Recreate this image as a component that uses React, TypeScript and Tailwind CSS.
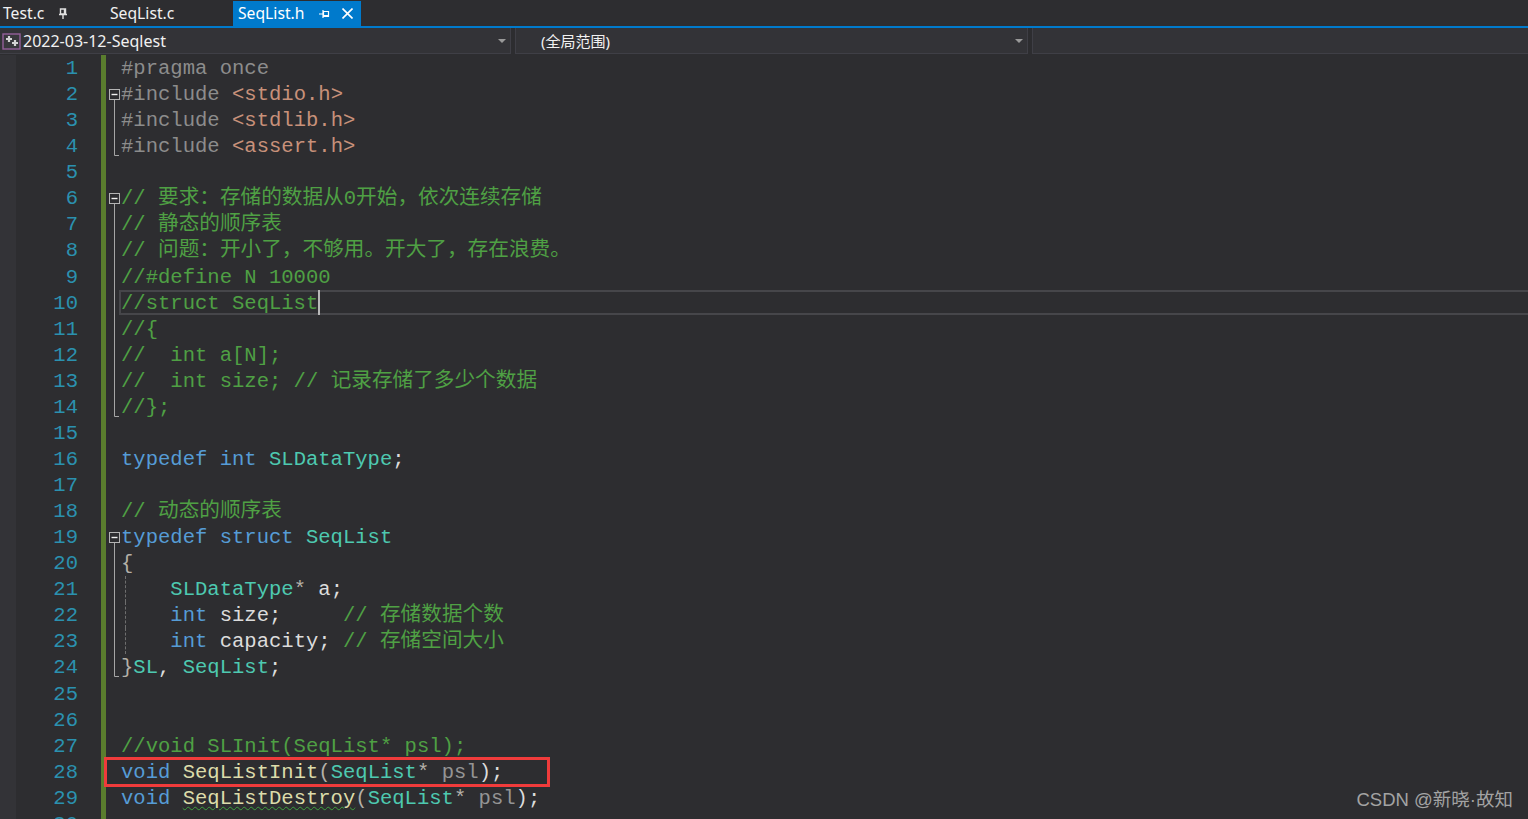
const KW = "text-[#569cd6]";
const TY = "text-[#4ec9b0]";
const CM = "text-[#4fa044]";
const PP = "text-[#8c8c8c]";
const ST = "text-[#c8917a]";
const ID = "text-[#dcdcdc]";
const BR = "text-[#b4b0a8]";
const FN = "text-[#dcdcaa]";
const PA = "text-[#949494]";

type Token = [string, string];
type Fold = "none" | "open" | "line" | "end";

type Line = {
  fold: Fold;
  tokens: Token[];
  guide?: boolean;
  current?: boolean;
  marked?: boolean;
};

const lines: Line[] = [
  { fold: "none", tokens: [["#pragma once", PP]] },
  { fold: "open", tokens: [["#include ", PP], ["<stdio.h>", ST]] },
  { fold: "line", tokens: [["#include ", PP], ["<stdlib.h>", ST]] },
  { fold: "end", tokens: [["#include ", PP], ["<assert.h>", ST]] },
  { fold: "none", tokens: [] },
  { fold: "open", tokens: [["// 要求：存储的数据从0开始，依次连续存储", CM]] },
  { fold: "line", tokens: [["// 静态的顺序表", CM]] },
  { fold: "line", tokens: [["// 问题：开小了，不够用。开大了，存在浪费。", CM]] },
  { fold: "line", tokens: [["//#define N 10000", CM]] },
  { fold: "line", tokens: [["//struct SeqList", CM]], current: true },
  { fold: "line", tokens: [["//{", CM]] },
  { fold: "line", tokens: [["//  int a[N];", CM]] },
  { fold: "line", tokens: [["//  int size; // 记录存储了多少个数据", CM]] },
  { fold: "end", tokens: [["//};", CM]] },
  { fold: "none", tokens: [] },
  {
    fold: "none",
    tokens: [["typedef int ", KW], ["SLDataType", TY], [";", ID]],
  },
  { fold: "none", tokens: [] },
  { fold: "none", tokens: [["// 动态的顺序表", CM]] },
  { fold: "open", tokens: [["typedef struct ", KW], ["SeqList", TY]] },
  { fold: "line", tokens: [["{", BR]] },
  {
    fold: "line",
    guide: true,
    tokens: [["    ", ID], ["SLDataType", TY], ["* ", BR], ["a;", ID]],
  },
  {
    fold: "line",
    guide: true,
    tokens: [["    ", ID], ["int", KW], [" size;     ", ID], ["// 存储数据个数", CM]],
  },
  {
    fold: "line",
    guide: true,
    tokens: [["    ", ID], ["int", KW], [" capacity; ", ID], ["// 存储空间大小", CM]],
  },
  { fold: "end", tokens: [["}", BR], ["SL", TY], [", ", ID], ["SeqList", TY], [";", ID]] },
  { fold: "none", tokens: [] },
  { fold: "none", tokens: [] },
  { fold: "none", tokens: [["//void SLInit(SeqList* psl);", CM]] },
  {
    fold: "none",
    marked: true,
    tokens: [
      ["void ", KW],
      ["SeqListInit", FN],
      ["(", BR],
      ["SeqList", TY],
      ["* ", BR],
      ["psl", PA],
      [");", ID],
    ],
  },
  {
    fold: "none",
    tokens: [
      ["void ", KW],
      ["SeqListDestroy", "text-[#dcdcaa] underline decoration-wavy decoration-[#3fa03f] decoration-1 underline-offset-2"],
      ["(", BR],
      ["SeqList", TY],
      ["* ", BR],
      ["psl", PA],
      [");", ID],
    ],
  },
  { fold: "none", tokens: [] },
];

function PinVertical() {
  return (
    <svg width="10" height="12" viewBox="0 0 10 12" className="text-[#e0e0e0]">
      <path d="M2.500 1h5v5h-5z M1 6.500h8 M5 7v4 M6.500 1v5" fill="none" stroke="currentColor" strokeWidth="1.4" />
    </svg>
  );
}

function PinHorizontal() {
  return (
    <svg width="12" height="10" viewBox="0 0 12 10" className="text-white">
      <path d="M5.500 2.500h5v5h-5z M5 1v8 M1 5h4 M5.500 6.500h5" fill="none" stroke="currentColor" strokeWidth="1.2" />
    </svg>
  );
}

function CloseIcon() {
  return (
    <svg width="11" height="11" viewBox="0 0 11 11" className="text-white">
      <path d="M.5.500l10 10M10.500.500l-10 10" fill="none" stroke="currentColor" strokeWidth="1.6" />
    </svg>
  );
}

function Tabs() {
  return (
    <div className="flex h-[26px] items-end text-[15.7px] text-[#f1f1f1]">
      <div className="flex h-[25px] w-[110px] items-center pl-[3px]">
        <span>Test.c</span>
        <span className="ml-[14px] flex">
          <PinVertical />
        </span>
      </div>
      <div className="flex h-[25px] w-[123px] items-center">SeqList.c</div>
      <div className="flex h-[25px] w-[128px] items-center bg-[#007acc] pl-[5px] text-white">
        <span>SeqList.h</span>
        <span className="ml-[14px] flex">
          <PinHorizontal />
        </span>
        <span className="ml-[12px] flex">
          <CloseIcon />
        </span>
      </div>
    </div>
  );
}

function Arrow() {
  return (
    <svg width="8" height="4" viewBox="0 0 8 4" className="text-[#999999]">
      <path d="M0 0h8L4 4z" fill="currentColor" />
    </svg>
  );
}

function ProjectIcon() {
  return (
    <svg width="19" height="17" viewBox="0 0 19 17">
      <rect x="1" y="1" width="17" height="15" fill="#38383c" stroke="#94609a" strokeWidth="1.400" />
      <path d="M7 3v6M4 6h6M13 7v6M10 10h6" stroke="#d4d4d4" strokeWidth="2.200" fill="none" />
    </svg>
  );
}

function NavBar() {
  return (
    <div className="box-content flex h-[26px] gap-[4px] border-t-2 border-[#007acc] text-[16px] text-[#f1f1f1]">
      <div className="flex h-[26px] w-[511px] items-center border-b border-r border-[#3f3f46] bg-[#333337] pl-[2px] pr-[4px] pt-[1px]">
        <ProjectIcon />
        <span className="ml-[2px]">2022-03-12-Seqlest</span>
        <span className="ml-auto flex">
          <Arrow />
        </span>
      </div>
      <div className="flex h-[26px] w-[513px] items-center border border-t-0 border-[#3f3f46] bg-[#333337] pl-[25px] pr-[4px] pt-[1px]">
        <span className="text-[15px]">(全局范围)</span>
        <span className="ml-auto flex">
          <Arrow />
        </span>
      </div>
      <div className="h-[26px] flex-1 border-b border-l border-[#3f3f46] bg-[#333337]" />
    </div>
  );
}

function FoldMark({ fold }: { fold: Fold }) {
  if (fold === "none") return null;
  return (
    <svg width="15" height="27" viewBox="0 0 15 27" className="block">
      {fold === "open" && (
        <>
          <path d="M8.500 17v10" stroke="#a5a5a5" fill="none" />
          <rect x="3.500" y="8.500" width="10" height="10" fill="#2d2d30" stroke="#b4b4b4" />
          <path d="M5.500 13.500h6" stroke="#f0f0f0" strokeWidth="1.400" fill="none" />
        </>
      )}
      {fold === "line" && <path d="M8.500 0v27" stroke="#a5a5a5" fill="none" />}
      {fold === "end" && <path d="M8.500 0v22.500h4.500" stroke="#a5a5a5" fill="none" />}
    </svg>
  );
}

// CJK runs sit a touch wider than the mono text around them
function TokenText({ token }: { token: Token }) {
  const parts = token[0].split(/([\u3000-\u9fff\uff00-\uffef]+)/);
  return (
    <span className={token[1]}>
      {parts.map((part, i) =>
        i % 2 === 1 ? (
          <span key={i} className="text-[20.65px]">
            {part}
          </span>
        ) : (
          part
        ),
      )}
    </span>
  );
}

function CodeRow({ line, n }: { line: Line; n: number }) {
  return (
    <div className="flex h-[26.07px]">
      <div className="w-[16px] shrink-0 bg-[#333337]" />
      <div className="w-[62px] shrink-0 text-right text-[#2b91af]">{n}</div>
      <div className="w-[23px] shrink-0" />
      <div className="w-[5px] shrink-0 bg-[#5a7d2e]" />
      <div className="w-[15px] shrink-0">
        <FoldMark fold={line.fold} />
      </div>
      <div className="relative min-w-0 flex-1 whitespace-pre">
        {line.tokens.map((t, i) => (
          <TokenText key={i} token={t} />
        ))}
        {line.current && (
          <>
            <div className="absolute inset-x-[-2px] bottom-[1px] top-0 border-2 border-[#46464a]" />
            <div className="absolute left-[197px] top-0 h-[25px] w-[2px] bg-[#b8b8b8]" />
          </>
        )}
        {line.guide && (
          <div className="absolute bottom-0 left-[4px] top-0 border-l border-dashed border-[#6e6e6e]" />
        )}
        {line.marked && (
          <div className="absolute left-[-17px] top-[-2px] h-[30px] w-[446px] border-[3px] border-[#f03b3b]" />
        )}
      </div>
    </div>
  );
}

export default function App() {
  return (
    <div className="relative h-[819px] w-[1528px] overflow-hidden bg-[#2d2d30] font-['Noto_Sans','Noto_Sans_CJK_SC',sans-serif]">
      <Tabs />
      <NavBar />
      <div className="pt-[1px] font-['Liberation_Mono','Noto_Sans_CJK_SC',monospace] text-[20.56px] leading-[28px]">
        {lines.map((line, i) => (
          <CodeRow key={i} line={line} n={i + 1} />
        ))}
      </div>
      <div className="absolute bottom-[5px] right-[15px] font-['Liberation_Sans','Noto_Sans_CJK_SC',sans-serif] text-[18.5px] leading-[28px] text-[#a3a3a3]">
        CSDN @新晓·故知
      </div>
    </div>
  );
}
